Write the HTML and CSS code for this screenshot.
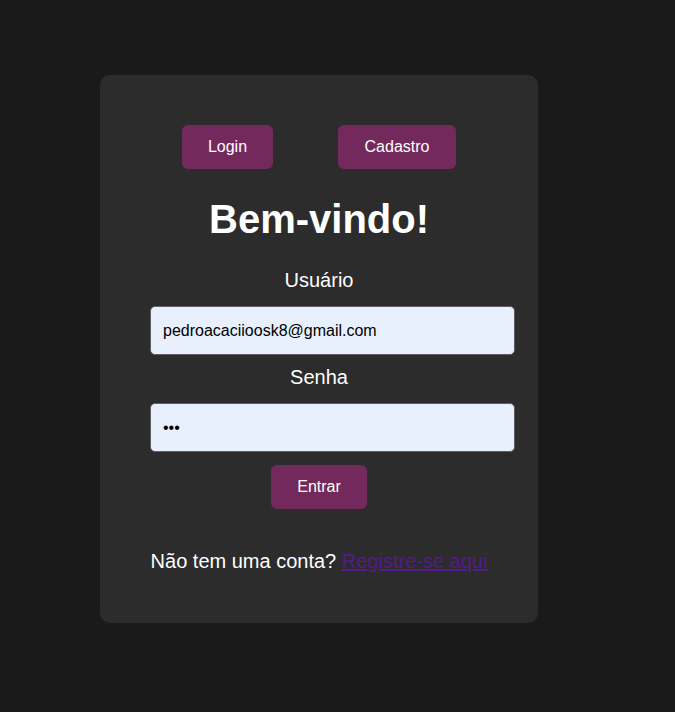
FILE: index.html
```html
<!DOCTYPE html>
<html lang="pt-BR">
<head>
<meta charset="utf-8">
<title>Login</title>
<link rel="stylesheet" href="styles.css">
</head>
<body>
<div class="card">
  <div class="tabs">
    <button class="btn tab-login">Login</button>
    <button class="btn tab-signup">Cadastro</button>
  </div>
  <h1 class="title">Bem-vindo!</h1>
  <form class="form">
    <label class="label" for="user">Usuário</label>
    <input class="input" id="user" type="text" value="pedroacaciioosk8@gmail.com">
    <label class="label" for="pass">Senha</label>
    <input class="input" id="pass" type="password" value="123">
    <button class="btn submit" type="button">Entrar</button>
  </form>
  <p class="footer">Não tem uma conta? <a class="link" href="#">Registre-se aqui</a></p>
</div>
</body>
</html>
```
FILE: styles.css
```css
html, body {
  margin: 0;
  background: #1a1a1a;
}
body {
  padding: 75px 0 0 100px;
  font-family: "Liberation Sans", Arial, sans-serif;
  color: #ffffff;
}
.card {
  box-sizing: border-box;
  width: 438px;
  height: 548px;
  padding: 50px;
  background: #2c2c2c;
  border-radius: 10px;
  text-align: center;
}
.tabs {
  display: flex;
  justify-content: center;
  gap: 65px;
}
.btn {
  box-sizing: border-box;
  height: 44px;
  font-family: "Liberation Sans", Arial, sans-serif;
  font-size: 16px;
  line-height: 18px;
  padding: 0;
  border: none;
  border-radius: 6px;
  background: #74295d;
  color: #ffffff;
}
.tab-login {
  width: 91px;
}
.tab-signup {
  width: 118px;
}
.title {
  margin: 27px 0;
  font-size: 40px;
  line-height: 46px;
  font-weight: bold;
}
.form {
  display: flex;
  flex-direction: column;
  align-items: center;
}
.label {
  font-size: 20px;
  line-height: 23px;
  margin-bottom: 14px;
}
.input {
  align-self: flex-start;
  box-sizing: border-box;
  width: 365px;
  height: 49px;
  margin-bottom: 11px;
  padding: 0 12px;
  border: 1px solid #5f5f5f;
  border-radius: 5px;
  background: #e8f0fe;
  color: #000000;
  font-family: "Liberation Sans", Arial, sans-serif;
  font-size: 16px;
}
.submit {
  width: 96px;
  margin-top: 2px;
}
.footer {
  margin: 41px 0 0;
  font-size: 20px;
  line-height: 23px;
}
.link {
  color: #551a8b;
}
```
